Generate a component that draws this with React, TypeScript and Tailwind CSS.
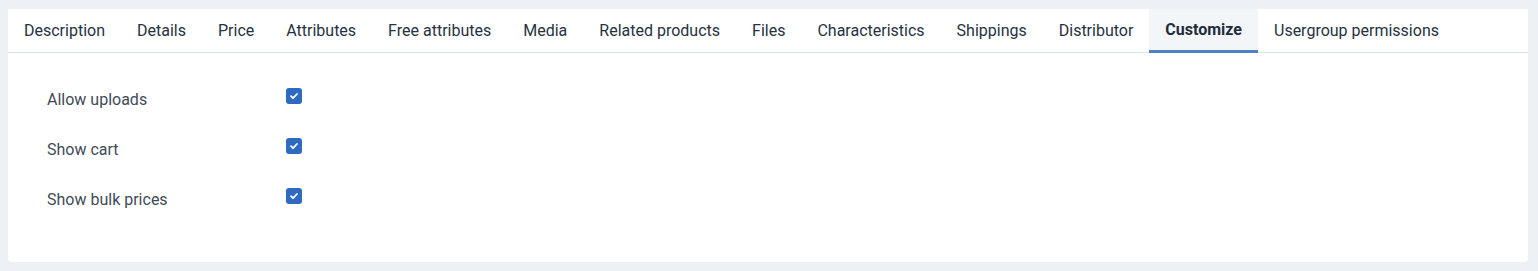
const tabs = [
  'Description',
  'Details',
  'Price',
  'Attributes',
  'Free attributes',
  'Media',
  'Related products',
  'Files',
  'Characteristics',
  'Shippings',
  'Distributor',
  'Customize',
  'Usergroup permissions',
];

const options = ['Allow uploads', 'Show cart', 'Show bulk prices'];

function Checkbox() {
  return (
    <span className="flex h-4 w-4 items-center justify-center rounded-[3px] bg-[#2d6ac0]">
      <svg width="10" height="10" viewBox="0 0 10 10" fill="none">
        <path d="M2 5.2l2 2 4-4.2" stroke="#fff" strokeWidth="1.8" strokeLinecap="round" strokeLinejoin="round" />
      </svg>
    </span>
  );
}

export default function App() {
  return (
    <div className="min-h-[271px] bg-[#edf1f5] pt-[9px] pl-2 pr-[10px] pb-[9px]" style={{ fontFamily: 'Roboto, "Liberation Sans", sans-serif' }}>
      <div className="rounded-b-[4px] bg-white h-[253px]">
        {/* Tabs */}
        <div className="flex h-[44px] border-b border-[#dde5ef]">
          {tabs.map((t) => {
            const active = t === 'Customize';
            return (
              <div
                key={t}
                className={
                  active
                    ? 'flex items-center px-4 pt-[1px] text-[16px] font-bold text-[#1f2d3d] bg-[#f3f6f9] border-b-[3px] border-[#4f80c2] -mb-px'
                    : 'flex items-center px-4 text-[16px] text-[#26323f]'
                }
              >
                {t}
              </div>
            );
          })}
        </div>

        {/* Options */}
        <div className="pt-[21px] pl-[39px]">
          {options.map((o) => (
            <div key={o} className="flex h-[50px] items-center">
              <div className="w-[239px] pt-[2px] text-[16px] text-[#414b57]">{o}</div>
              <div className="-mt-[6px]">
                <Checkbox />
              </div>
            </div>
          ))}
        </div>
      </div>
    </div>
  );
}
